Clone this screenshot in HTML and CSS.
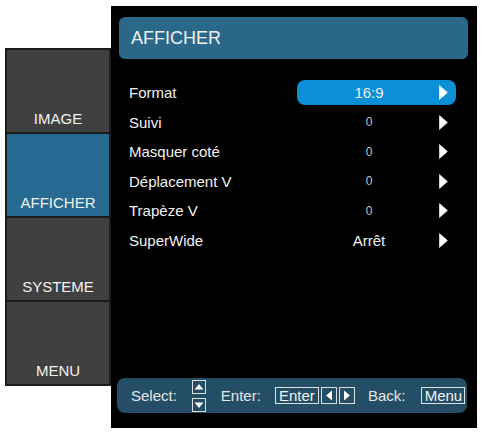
FILE: index.html
```html
<!DOCTYPE html>
<html lang="fr">
<head>
<meta charset="utf-8">
<title>AFFICHER</title>
<link rel="stylesheet" href="styles.css">
</head>
<body>
<div class="screen">
  <nav class="sidebar">
    <div class="tab"><span>IMAGE</span></div>
    <div class="tab active"><span>AFFICHER</span></div>
    <div class="tab"><span>SYSTEME</span></div>
    <div class="tab"><span>MENU</span></div>
  </nav>
  <main class="panel">
    <header class="title">AFFICHER</header>
    <ul class="rows">
      <li class="row selected"><span class="label">Format</span><span class="value-box"><span class="value">16:9</span><svg class="arrow" viewBox="0 0 8 14"><polygon points="0,0 8,7 0,14" fill="#fff"/></svg></span></li>
      <li class="row"><span class="label">Suivi</span><span class="value-box"><span class="value num">0</span><svg class="arrow" viewBox="0 0 8 14"><polygon points="0,0 8,7 0,14" fill="#fff"/></svg></span></li>
      <li class="row"><span class="label">Masquer coté</span><span class="value-box"><span class="value num">0</span><svg class="arrow" viewBox="0 0 8 14"><polygon points="0,0 8,7 0,14" fill="#fff"/></svg></span></li>
      <li class="row"><span class="label">Déplacement V</span><span class="value-box"><span class="value num">0</span><svg class="arrow" viewBox="0 0 8 14"><polygon points="0,0 8,7 0,14" fill="#fff"/></svg></span></li>
      <li class="row"><span class="label">Trapèze V</span><span class="value-box"><span class="value num">0</span><svg class="arrow" viewBox="0 0 8 14"><polygon points="0,0 8,7 0,14" fill="#fff"/></svg></span></li>
      <li class="row"><span class="label">SuperWide</span><span class="value-box"><span class="value">Arrêt</span><svg class="arrow" viewBox="0 0 8 14"><polygon points="0,0 8,7 0,14" fill="#fff"/></svg></span></li>
    </ul>
    <footer class="help">
      <span class="hint">Select:</span>
      <span class="updown">
        <span class="mini"><svg viewBox="0 0 12 12"><polygon points="1.5,8.5 6,3 10.5,8.5" fill="#fff"/></svg></span>
        <span class="mini"><svg viewBox="0 0 12 12"><polygon points="1.5,3.5 6,9 10.5,3.5" fill="#fff"/></svg></span>
      </span>
      <span class="hint gap-enter">Enter:</span>
      <span class="key key-enter">Enter</span>
      <span class="key arrowkey"><svg viewBox="0 0 14 15"><polygon points="10,2.5 4,7.5 10,12.5" fill="#fff"/></svg></span>
      <span class="key arrowkey"><svg viewBox="0 0 14 15"><polygon points="4,2.5 10,7.5 4,12.5" fill="#fff"/></svg></span>
      <span class="hint gap-back">Back:</span>
      <span class="key key-menu">Menu</span>
    </footer>
  </main>
</div>
</body>
</html>
```

FILE: styles.css
```css
html, body {
  margin: 0;
  padding: 0;
  background: #ffffff;
}

body {
  font-family: "Liberation Sans", Arial, sans-serif;
}

.screen {
  display: flex;
  align-items: flex-start;
  width: 482px;
  height: 432px;
  padding: 6px 0 0 5px;
  box-sizing: border-box;
}

.sidebar {
  margin-top: 42px;
  width: 106px;
  box-sizing: border-box;
  border: 2px solid #1c1c1c;
  background: #1c1c1c;
  display: flex;
  flex-direction: column;
  gap: 2px;
}

.tab {
  height: 82px;
  box-sizing: border-box;
  background: #404040;
  display: flex;
  align-items: flex-end;
  justify-content: center;
  padding-bottom: 5px;
  color: #f2f2f2;
  font-size: 15px;
  line-height: 17px;
}

.tab.active {
  background: #266a91;
}

.panel {
  width: 366px;
  height: 422px;
  box-sizing: border-box;
  background: #000000;
  display: flex;
  flex-direction: column;
  padding: 11px 0 15px 0;
}

.title {
  margin: 0 9px 0 8px;
  height: 42px;
  border-radius: 6px;
  background: #2a6889;
  color: #f0f0f0;
  font-size: 18px;
  display: flex;
  align-items: center;
  padding-left: 12px;
}

.rows {
  list-style: none;
  margin: 19px 0 0 0;
  padding: 0;
}

.row {
  height: 29.5px;
  display: flex;
  align-items: center;
  padding-left: 18px;
  color: #f2f2f2;
  font-size: 15px;
}

.label {
  flex: 1;
}

.value-box {
  width: 159px;
  height: 25px;
  margin-right: 21px;
  box-sizing: border-box;
  padding-right: 8px;
  border-radius: 8px;
  display: flex;
  align-items: center;
}

.selected .value-box {
  background: #0b8fd6;
}

.value {
  width: 144px;
  text-align: center;
}

.value.num {
  font-size: 12px;
  color: #c4c4c4;
}

.arrow {
  width: 9px;
  height: 15px;
  margin-left: -2px;
  display: block;
}

.help {
  margin: auto 10px 0 6px;
  height: 35px;
  border-radius: 8px;
  background: #244e65;
  display: flex;
  align-items: center;
  padding-left: 14px;
  color: #e6e6e6;
  font-size: 15px;
}

.updown {
  margin-left: 15px;
  display: flex;
  flex-direction: column;
  gap: 4px;
}

.mini {
  width: 14px;
  height: 14px;
  box-sizing: border-box;
  border: 1px solid #dedede;
  display: flex;
}

.mini svg {
  width: 12px;
  height: 12px;
  display: block;
}

.gap-enter {
  margin-left: 15px;
}

.key {
  height: 17px;
  box-sizing: border-box;
  border: 1px solid #dedede;
  line-height: 15px;
  display: flex;
  align-items: center;
  justify-content: center;
  color: #f2f2f2;
}

.key-enter {
  margin-left: 14px;
  width: 44px;
}

.arrowkey {
  margin-left: 2px;
  width: 16px;
}

.arrowkey svg {
  width: 14px;
  height: 15px;
  display: block;
}

.gap-back {
  margin-left: 13px;
}

.key-menu {
  margin-left: 16px;
  width: 44px;
}
```
